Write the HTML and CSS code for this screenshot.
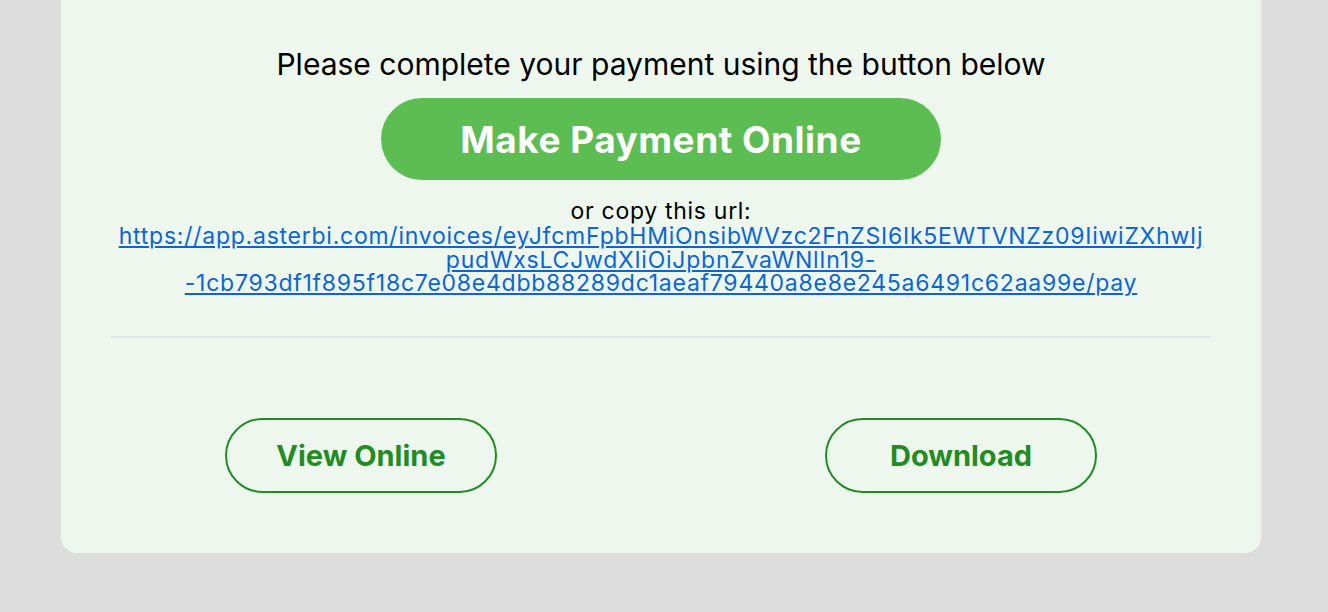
FILE: index.html
```html
<!DOCTYPE html>
<html lang="en">
<head>
    <meta charset="UTF-8">
    <meta name="viewport" content="width=device-width, initial-scale=1.0">
    <title>Invoice Payment</title>
    <link rel="stylesheet" href="styles.css">
</head>
<body>
    <div class="invoice-card">
        <p class="pay-intro">Please complete your payment using the button below</p>

        <a href="#" class="btn-pay">Make Payment Online</a>

        <div class="copy-url">
            <span class="copy-label">or copy this url:</span>
            <a href="#" class="pay-link">https://app.asterbi.com/invoices/eyJfcmFpbHMiOnsibWVzc2FnZSI6Ik5EWTVNZz09IiwiZXhwIj<br>pudWxsLCJwdXIiOiJpbnZvaWNlIn19-<br>-1cb793df1f895f18c7e08e4dbb88289dc1aeaf79440a8e8e245a6491c62aa99e/pay</a>
        </div>

        <hr class="divider">

        <div class="actions">
            <div class="action-cell">
                <a href="#" class="btn-outline">View Online</a>
            </div>
            <div class="action-cell">
                <a href="#" class="btn-outline">Download</a>
            </div>
        </div>
    </div>
</body>
</html>
```

FILE: styles.css
```css
* {
    margin: 0;
    padding: 0;
    box-sizing: border-box;
    font-family: 'Inter', 'Open Sans', sans-serif;
}

body {
    background-color: #dddddd;
    padding-right: 6px;
    overflow: hidden;
}

.invoice-card {
    width: 1200px;
    margin: -24px auto 59px;
    padding: 70px 50px 60px;
    background-color: #edf7ee;
    border-radius: 16px;
    text-align: center;
}

.pay-intro {
    font-size: 30px;
    line-height: 36px;
    color: #000;
    margin-bottom: 16px;
}

.btn-pay {
    display: flex;
    justify-content: center;
    align-items: center;
    width: 560px;
    height: 82px;
    margin: 0 auto;
    border-radius: 41px;
    background-color: #5cbd52;
    color: white;
    font-size: 37px;
    font-weight: 700;
    letter-spacing: 0.5px;
    text-decoration: none;
}

.copy-url {
    margin-top: 19px;
}

.copy-label {
    display: block;
    font-size: 23px;
    line-height: 24px;
    letter-spacing: 0.7px;
    color: #000;
    margin-bottom: 2px;
}

.pay-link {
    display: block;
    font-size: 23px;
    line-height: 23.5px;
    letter-spacing: 0.75px;
    color: #0b65d8;
    white-space: nowrap;
}

.divider {
    border: none;
    height: 2px;
    background-color: #e0e4e8;
    margin-top: 40px;
}

.actions {
    display: grid;
    grid-template-columns: 1fr 1fr;
    margin: 80px -50px 0;
}

.action-cell {
    display: flex;
    justify-content: center;
}

.btn-outline {
    display: flex;
    justify-content: center;
    align-items: center;
    width: 272px;
    height: 75px;
    border: 2px solid #228b22;
    border-radius: 38px;
    color: #228b22;
    font-size: 29px;
    font-weight: 700;
    text-decoration: none;
}
```
